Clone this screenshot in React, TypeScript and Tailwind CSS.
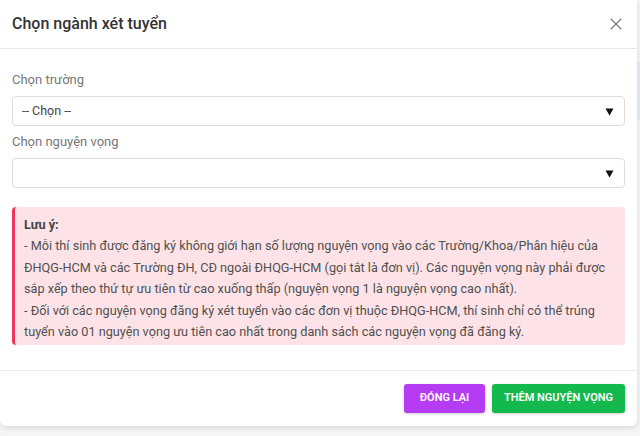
import { X } from "lucide-react"

const font = { fontFamily: "Roboto, 'Liberation Sans', sans-serif" }

function SelectBox({ value }: { value: string }) {
    return (
        <div className="mx-3 h-[30px] border border-[#dcdcdc] rounded-[4px] flex items-center justify-between pl-[9px] pr-[10px] bg-white">
            <span className="text-[12.5px] text-[#444]">{value}</span>
            <svg width="9" height="8" viewBox="0 0 9 8" className="mt-[1px]">
                <path d="M0.5 0.5 H8.5 L4.5 7.5 Z" fill="#111" />
            </svg>
        </div>
    )
}

export default function App() {
    return (
        <div className="w-[640px] h-[436px] bg-[#f6f6f6] flex overflow-hidden" style={font}>
            <div className="w-[637px] h-[426px] bg-white rounded-b-[6px] shadow-[0_2px_6px_rgba(0,0,0,0.12)] flex flex-col">
                <div className="h-[49px] border-b border-[#e6e6e6] flex items-center justify-between pl-3 pr-[11px]">
                    <h2 className="text-[16px] text-[#333] font-medium">Chọn ngành xét tuyển</h2>
                    <X className="w-[20px] h-[20px] text-[#777]" strokeWidth={1.3} />
                </div>

                <div className="flex-1 pt-[21px]">
                    <div className="px-3 text-[13px] text-[#777] leading-[20px] mb-[6px]">Chọn trường</div>
                    <SelectBox value="-- Chọn --" />
                    <div className="px-3 text-[13px] text-[#777] leading-[20px] mt-[6px] mb-[6px]">Chọn nguyện vọng</div>
                    <SelectBox value="" />

                    <div className="mx-3 mt-[19px] bg-[#fde3e7] border-l-[3px] border-[#f2355c] rounded-[4px] pl-[9px] pr-2 pt-[7px] pb-[3px] text-[12.7px] leading-[21.4px] text-[#505050]">
                        <div className="font-bold text-[#444]">Lưu ý:</div>
                        <div>- Mỗi thí sinh được đăng ký không giới hạn số lượng nguyện vọng vào các Trường/Khoa/Phân hiệu của ĐHQG-HCM và các Trường ĐH, CĐ ngoài ĐHQG-HCM (gọi tắt là đơn vị). Các nguyện vọng này phải được sắp xếp theo thứ tự ưu tiên từ cao xuống thấp (nguyện vọng 1 là nguyện vọng cao nhất).</div>
                        <div>- Đối với các nguyện vọng đăng ký xét tuyển vào các đơn vị thuộc ĐHQG-HCM, thí sinh chỉ có thể trúng tuyển vào 01 nguyện vọng ưu tiên cao nhất trong danh sách các nguyện vọng đã đăng ký.</div>
                    </div>
                </div>

                <div className="h-[56px] border-t border-[#ececec] flex items-center justify-end gap-[7px] pr-3">
                    <button className="h-[29px] w-[81px] rounded-[3px] bg-[#b53cf3] text-white text-[11px] font-semibold shadow-[0_1px_3px_rgba(0,0,0,0.2)]">ĐÓNG LẠI</button>
                    <button className="h-[29px] w-[133px] rounded-[3px] bg-[#13b94d] text-white text-[11px] font-semibold shadow-[0_1px_3px_rgba(0,0,0,0.2)]">THÊM NGUYỆN VỌNG</button>
                </div>
            </div>
            <div className="flex-1">
                <div className="mt-[62px] h-[58px] bg-[#d9e3f3]" />
            </div>
        </div>
    )
}
